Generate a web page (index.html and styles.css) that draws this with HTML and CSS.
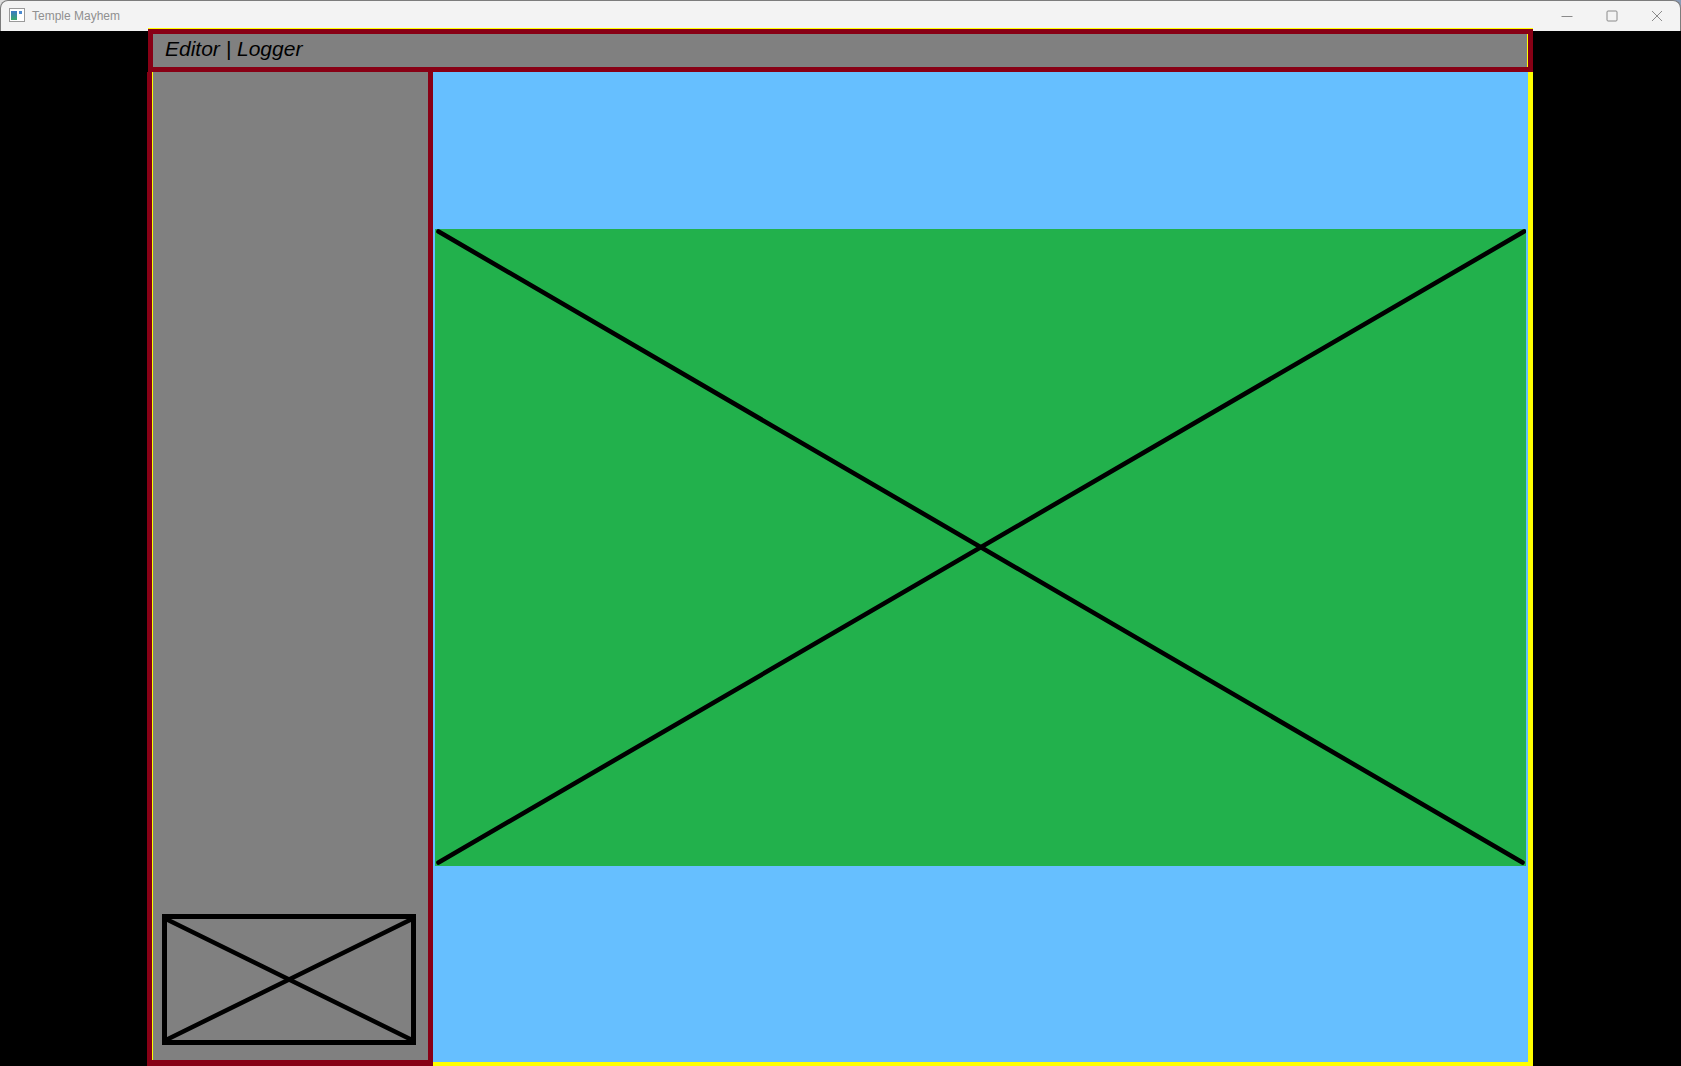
FILE: index.html
```html
<!DOCTYPE html>
<html lang="en">
<head>
<meta charset="utf-8">
<title>Temple Mayhem</title>
<link rel="stylesheet" href="styles.css">
</head>
<body>
<div class="window">
  <div class="titlebar">
    <svg class="app-icon" width="16" height="14" viewBox="0 0 16 14">
      <defs>
        <linearGradient id="ig" x1="0" y1="0" x2="0" y2="1">
          <stop offset="0" stop-color="#3a78c8"/>
          <stop offset="1" stop-color="#3aa86a"/>
        </linearGradient>
      </defs>
      <rect x="0.5" y="0.5" width="15" height="13" fill="#ffffff" stroke="#9a9a9a"/>
      <rect x="2" y="3" width="6" height="9" fill="url(#ig)"/>
      <rect x="10" y="3" width="3" height="3" fill="#4a8ad0"/>
    </svg>
    <span class="title">Temple Mayhem</span>
    <div class="spacer"></div>
    <div class="controls">
      <div class="ctl"><svg width="12" height="12" viewBox="0 0 12 12"><line x1="0.5" y1="6.5" x2="11.5" y2="6.5" stroke="#8a8a8a" stroke-width="1"/></svg></div>
      <div class="ctl"><svg width="12" height="12" viewBox="0 0 12 12"><rect x="1" y="1" width="10" height="10" rx="1" fill="none" stroke="#8a8a8a" stroke-width="1"/></svg></div>
      <div class="ctl"><svg width="12" height="12" viewBox="0 0 12 12"><path d="M1 1 L11 11 M11 1 L1 11" stroke="#8a8a8a" stroke-width="1" fill="none"/></svg></div>
    </div>
  </div>
  <div class="client">
    <div class="stage">
      <div class="header">Editor | Logger</div>
      <div class="row">
        <div class="sidebar">
          <div class="thumb">
            <svg class="thumb-x" width="244" height="121" viewBox="0 0 244 121">
              <line x1="1" y1="1" x2="243" y2="120" stroke="#000" stroke-width="4.5" stroke-linecap="round"/>
              <line x1="1" y1="120" x2="243" y2="1" stroke="#000" stroke-width="4.5" stroke-linecap="round"/>
            </svg>
          </div>
        </div>
        <div class="main">
          <div class="scene">
            <svg width="1091" height="637" viewBox="0 0 1091 637">
              <line x1="3.5" y1="2.5" x2="1087.5" y2="633.5" stroke="#000" stroke-width="4.6" stroke-linecap="round"/>
              <line x1="3.5" y1="633.5" x2="1089" y2="2.5" stroke="#000" stroke-width="4.6" stroke-linecap="round"/>
            </svg>
          </div>
        </div>
      </div>
    </div>
  </div>
</div>
</body>
</html>
```

FILE: styles.css
```css
html, body {
  margin: 0;
  padding: 0;
  height: 1066px;
  overflow: hidden;
}

body {
  background: linear-gradient(to right, #dcdcdc, #8a9cb8);
}

.window {
  width: 1681px;
  height: 1066px;
  display: flex;
  flex-direction: column;
  overflow: hidden;
}

.titlebar {
  flex: none;
  height: 31px;
  box-sizing: border-box;
  display: flex;
  align-items: center;
  background: #f3f3f3;
  border: 1px solid #7c7c7c;
  border-bottom: none;
  border-radius: 8px 8px 0 0;
  padding-left: 8px;
}

.app-icon {
  display: block;
  margin-top: -2px;
}

.title {
  margin-left: 7px;
  font: 12px/16px "Liberation Sans", "Noto Sans", sans-serif;
  color: #909090;
}

.spacer {
  flex: 1;
}

.controls {
  display: flex;
  margin-right: 1px;
  height: 30px;
}

.ctl {
  width: 45px;
  display: flex;
  align-items: center;
  justify-content: center;
}

.ctl svg {
  display: block;
}

.client {
  flex: 1;
  min-height: 0;
  background: #000;
}

.stage {
  margin-top: -3px;
  margin-left: 148px;
  width: 1385px;
  border-top: 1px solid #ffff00;
}

.header {
  height: 43px;
  box-sizing: border-box;
  border: 5px solid #880015;
  background: #808080;
  box-shadow: inset -1px 0 0 #ffff00;
  padding-left: 12px;
  font: italic 21px/29px "Liberation Sans", Arial, sans-serif;
  color: #000;
  white-space: nowrap;
}

.row {
  display: flex;
  height: 994px;
}

.sidebar {
  flex: none;
  width: 286px;
  margin-left: -1px;
  height: 994px;
  box-sizing: border-box;
  border: 5px solid #880015;
  border-top: none;
  border-bottom-width: 6px;
  background: #808080;
  box-shadow: inset 1px 0 0 #ffff00;
  display: flex;
  flex-direction: column;
  justify-content: flex-end;
  padding: 0 0 15px 10px;
}

.thumb {
  width: 254px;
  height: 131px;
  box-sizing: border-box;
  border: 5px solid #000;
}

.thumb-x {
  display: block;
  overflow: visible;
}

.main {
  flex: 1;
  height: 994px;
  box-sizing: border-box;
  background: #66bfff;
  border-right: 5px solid #ffff00;
  border-bottom: 4px solid #ffff00;
  padding: 157px 2px 0;
}

.scene {
  height: 637px;
  background: #22b14c;
}

.scene svg {
  display: block;
}
```
